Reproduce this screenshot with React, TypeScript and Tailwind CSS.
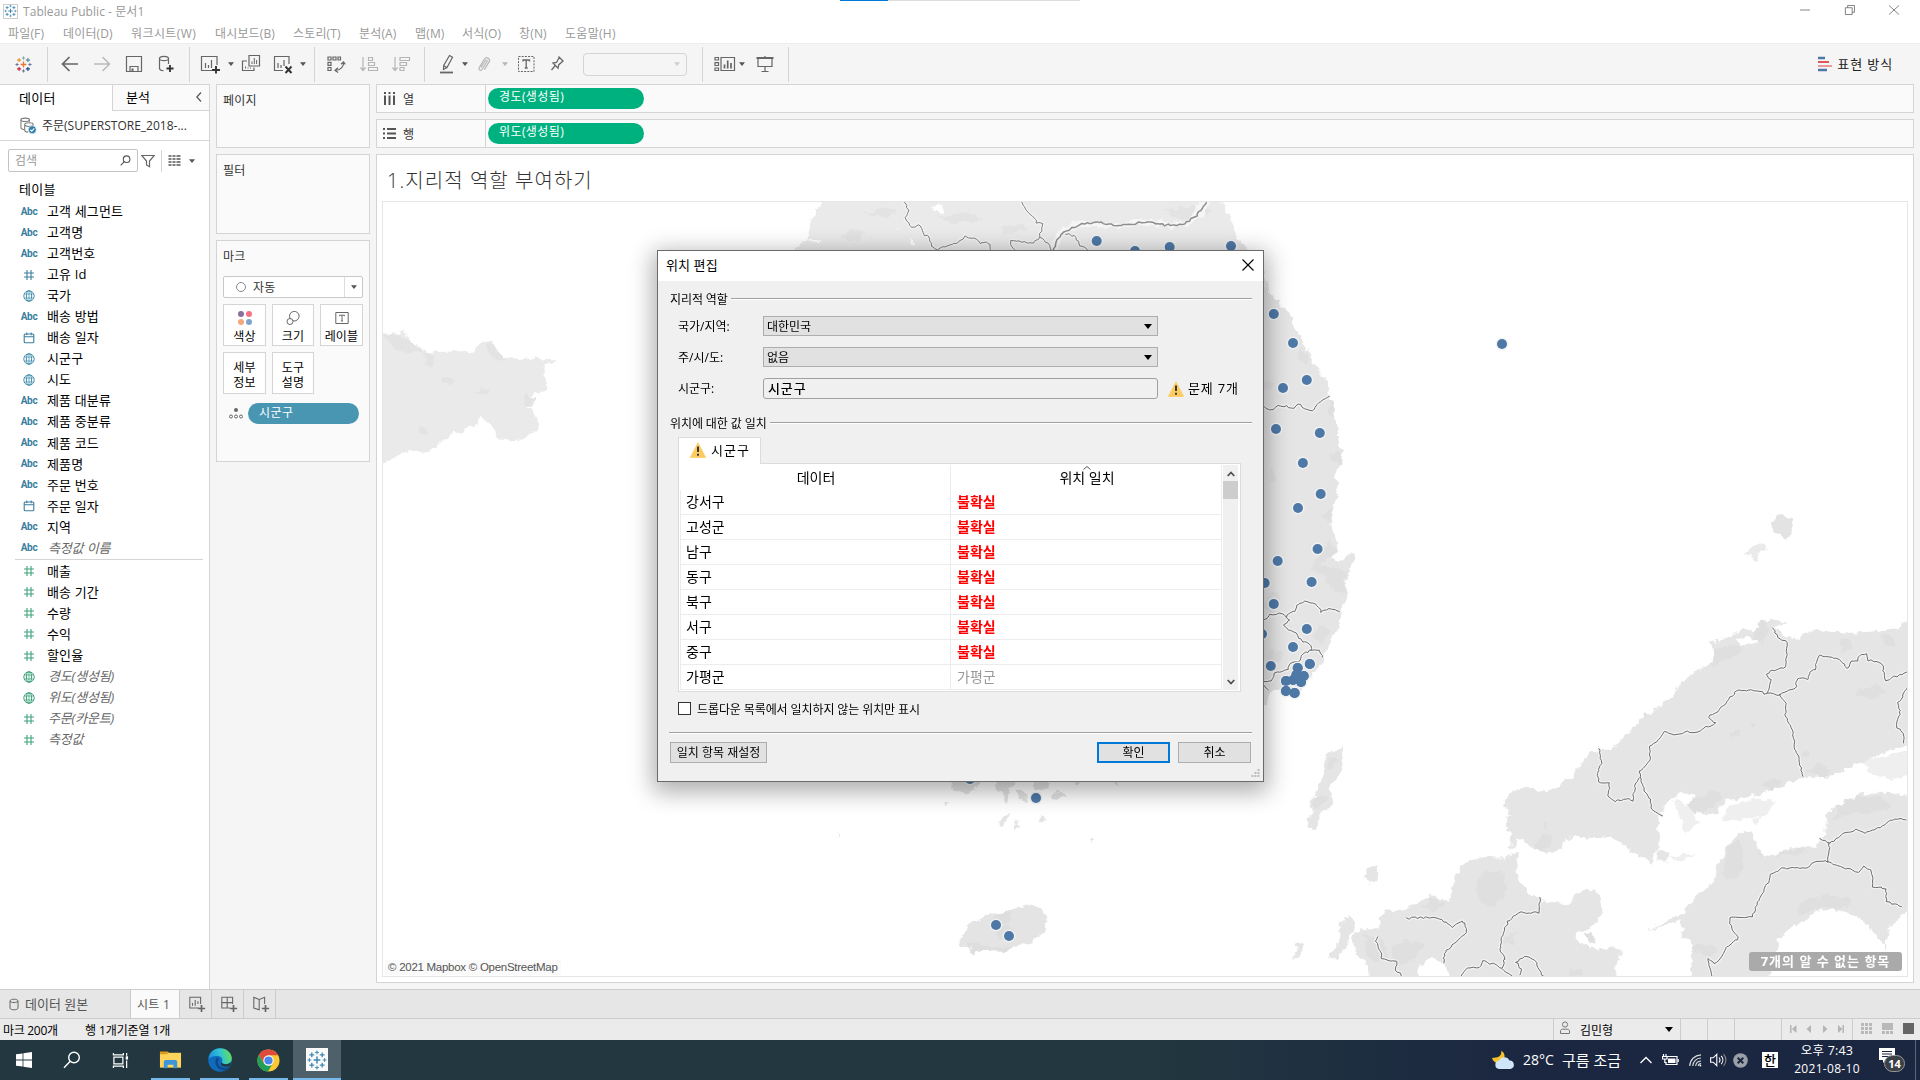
import React from "react";

const FONT = "font-['Open_Sans','Noto_Sans_CJK_KR',sans-serif]";

type Kind = "abc" | "num" | "geo" | "date";

const dimensions: [Kind, string, boolean?][] = [
  ["abc", "고객 세그먼트"],
  ["abc", "고객명"],
  ["abc", "고객번호"],
  ["num", "고유 Id"],
  ["geo", "국가"],
  ["abc", "배송 방법"],
  ["date", "배송 일자"],
  ["geo", "시군구"],
  ["geo", "시도"],
  ["abc", "제품 대분류"],
  ["abc", "제품 중분류"],
  ["abc", "제품 코드"],
  ["abc", "제품명"],
  ["abc", "주문 번호"],
  ["date", "주문 일자"],
  ["abc", "지역"],
  ["abc", "측정값 이름", true],
];

const measures: [Kind, string, boolean?][] = [
  ["num", "매출"],
  ["num", "배송 기간"],
  ["num", "수량"],
  ["num", "수익"],
  ["num", "할인율"],
  ["geo", "경도(생성됨)", true],
  ["geo", "위도(생성됨)", true],
  ["num", "주문(카운트)", true],
  ["num", "측정값", true],
];

function Cross({ x, y, r, c, w = 1 }: { x: number; y: number; r: number; c: string; w?: number }) {
  return <path d={`M${x - r} ${y}H${x + r}M${x} ${y - r}V${y + r}`} stroke={c} strokeWidth={w} fill="none" />;
}

function TableauLogo({ mono, className }: { mono?: boolean; className: string }) {
  const k = (c: string) => (mono ? "#3f86b5" : c);
  return (
    <svg viewBox="0 0 20 20" className={className}>
      <Cross x={10} y={10} r={3.4} c={k("#e8762c")} w={1.5} />
      <Cross x={10} y={2.4} r={1.9} c={k("#7199a6")} />
      <Cross x={10} y={17.6} r={1.9} c={k("#5b6591")} />
      <Cross x={2.4} y={10} r={1.9} c={k("#5c6692")} />
      <Cross x={17.6} y={10} r={1.9} c={k("#5c6692")} />
      <Cross x={4.8} y={4.8} r={2.4} c={k("#eb912b")} w={1.3} />
      <Cross x={15.2} y={4.8} r={2.4} c={k("#59879b")} w={1.3} />
      <Cross x={4.8} y={15.2} r={2.4} c={k("#c72035")} w={1.3} />
      <Cross x={15.2} y={15.2} r={2.4} c={k("#1f457e")} w={1.3} />
    </svg>
  );
}

function Caret({ className = "text-[#555]" }: { className?: string }) {
  return (
    <svg viewBox="0 0 6 4" className={`h-1 w-1.5 shrink-0 ${className}`}>
      <path d="M0 .3h6L3 4z" fill="currentColor" />
    </svg>
  );
}

function Ico({ children, className = "" }: { children: React.ReactNode; className?: string }) {
  return (
    <svg viewBox="0 0 20 20" className={`h-5 w-5 shrink-0 ${className}`} fill="none" stroke="#666" strokeWidth="1.2">
      {children}
    </svg>
  );
}

function Cell({ w, children }: { w: string; children?: React.ReactNode }) {
  return <div className={`flex h-full shrink-0 items-center justify-center ${w}`}>{children}</div>;
}

function Sep() {
  return <div className="h-[35px] w-px shrink-0 bg-[#d4d4d4]" />;
}

function Warn({ className }: { className: string }) {
  return (
    <svg viewBox="0 0 16 16" className={className}>
      <path d="M8 .8 15.6 15.4H.4z" fill="#fdcc60" stroke="#fdcc60" strokeWidth=".8" strokeLinejoin="round" />
      <path d="M8 4.5v5.6M8 11.8v2" stroke="#333" strokeWidth="1.9" />
    </svg>
  );
}

function FieldIcon({ kind, green }: { kind: Kind; green?: boolean }) {
  const c = green ? "#3fa37c" : "#3a7e9e";
  if (kind === "abc")
    return <span className="font-[Roboto] text-[10px] leading-none font-bold tracking-[-0.3px] text-[#3a7e9e]">Abc</span>;
  if (kind === "num")
    return (
      <svg viewBox="0 0 12 12" className="h-3 w-3" stroke={c} strokeWidth="1.1" fill="none">
        <path d="M4 1v10M8 1v10M1 4h10M1 8h10" />
      </svg>
    );
  if (kind === "geo")
    return (
      <svg viewBox="0 0 12 12" className="-ml-px h-3 w-3" stroke={green ? c : "#4a94b0"} strokeWidth="1" fill="none">
        <circle cx="6" cy="6" r="5.2" />
        <ellipse cx="6" cy="6" rx="2.6" ry="5.2" />
        <path d="M1.3 4h9.4M1.3 8h9.4M6 .8v10.4" strokeWidth=".8" />
      </svg>
    );
  return (
    <svg viewBox="0 0 12 12" className="h-3 w-3" stroke={c} strokeWidth="1.1" fill="none">
      <rect x="1.2" y="2" width="9.6" height="8.8" rx="1" />
      <path d="M1.2 4.8h9.6M3.8.6v2.6M8.2.6v2.6" />
    </svg>
  );
}

function FieldRow({ f, green }: { f: [Kind, string, boolean?]; green?: boolean }) {
  return (
    <div className="flex h-[21.05px] items-center">
      <div className="flex w-[58px] shrink-0 justify-center">
        <FieldIcon kind={f[0]} green={green} />
      </div>
      <span
        className={
          f[2]
            ? "-ml-2.5 text-[13px] leading-none tracking-[-0.15px] text-[#666] italic"
            : "-ml-[11px] text-[13px] leading-none tracking-[0.15px] whitespace-nowrap text-black"
        }
      >
        {f[1]}
      </span>
    </div>
  );
}

function TopBars() {
  return (
    <>
      <div className="flex h-[22px] shrink-0 items-center bg-white">
        <div className="ml-[3px] flex h-[15px] w-[15px] items-center justify-center border border-[#ccc] bg-white">
          <TableauLogo mono className="h-3.5 w-3.5" />
        </div>
        <span className="ml-[5px] w-[817px] pt-px text-[12px] leading-none tracking-[0.05px] text-[#999]">Tableau Public - 문서1</span>
        <div className="flex h-full items-start">
          <div className="h-px w-[48px] bg-[#0078d7]" />
          <div className="h-px w-48 bg-[#ddd]" />
        </div>
        <svg viewBox="0 0 110 12" className="mr-[21px] mb-0.5 ml-auto h-3 w-[100px]" fill="none" stroke="#777" preserveAspectRatio="xMaxYMid meet">
          <path d="M1 6h11M99 1l11 10M110 1 99 11" />
          <path d="M51 3.5h7.5V11H51zM53.5 3.5V1H61v7.5h-2.5" />
        </svg>
      </div>
      <div className="flex h-[21px] shrink-0 items-center bg-white pt-[2px] pl-2 text-[12px] leading-none tracking-[0.15px] whitespace-nowrap text-[#999]">
        <span className="w-[55px]">파일(F)</span>
        <span className="w-[68px]">데이터(D)</span>
        <span className="w-[84px] tracking-[0.4px]">워크시트(W)</span>
        <span className="w-[78px]">대시보드(B)</span>
        <span className="w-[66px]">스토리(T)</span>
        <span className="w-[56px]">분석(A)</span>
        <span className="w-[47px]">맵(M)</span>
        <span className="w-[57px]">서식(O)</span>
        <span className="w-[46px]">창(N)</span>
        <span className="tracking-[0.3px]">도움말(H)</span>
      </div>
      <div className="flex h-[41px] shrink-0 items-center border-t border-[#eee] bg-[#f5f5f5]">
        <Cell w="w-[47px]">
          <TableauLogo className="h-[17px] w-[17px]" />
        </Cell>
        <Sep />
        <Cell w="w-8 ml-1.5">
          <Ico>
            <path d="M18 10H3M9.5 3 2.5 10l7 7" strokeWidth="1.7" />
          </Ico>
        </Cell>
        <Cell w="w-8">
          <Ico>
            <path d="M2 10h15M10.5 3l7 7-7 7" stroke="#b9b9b9" strokeWidth="1.5" />
          </Ico>
        </Cell>
        <Cell w="w-8">
          <Ico>
            <path d="M2.5 2.5h15v15h-15zM6 17.500v-5h8v5" />
            <path d="M7.500 14.500h2v3h-2z" fill="#666" stroke="none" />
          </Ico>
        </Cell>
        <Cell w="w-8">
          <Ico>
            <path d="M3.500 4.500c0-1.200 2-2.200 4.500-2.200s4.500 1 4.500 2.200-2 2.200-4.500 2.200-4.500-1-4.500-2.200zM3.500 4.500v10c0 1.200 1.500 2 4 2.200M12.500 4.500V10" />
            <path d="M14 11v7M10.500 14.500h7" stroke="#333" strokeWidth="1.8" />
          </Ico>
        </Cell>
        <Cell w="w-[7px]" />
        <Sep />
        <Cell w="w-8 ml-1">
          <Ico>
            <path d="M12 16.500H1.500v-14h15.500V11" />
            <path d="M5.500 14V9M8.500 14v-3M11.500 14V6" />
            <path d="M16 12v7.500M12 16h8" stroke="#333" strokeWidth="1.9" />
          </Ico>
        </Cell>
        <Cell w="w-[9px]"><Caret /></Cell>
        <Cell w="w-8">
          <Ico>
            <path d="M8 1.500h10.500v10.500H8zM6 7H1.500v9.500H13v-3" />
            <path d="M11 10V7.500M13.300 10V4M15.600 10V6M4.500 14.500v-2M7 14.500v-1M9.500 14.500v-1" strokeWidth="1" />
          </Ico>
        </Cell>
        <Cell w="w-[31px]">
          <Ico>
            <path d="M10 16.500H1.500v-14h14.500V10" />
            <path d="M5 14V9M8 14v-3M11 12V6" />
            <path d="M12.500 12.500l6 6.500M18.500 12.500l-6 6.500" stroke="#333" strokeWidth="1.9" />
          </Ico>
        </Cell>
        <Cell w="w-[9px]"><Caret /></Cell>
        <Cell w="w-[7px]" />
        <Sep />
        <Cell w="w-8 ml-[5px]">
          <Ico>
            <path d="M2 3h3v3H2zM7 3h3v3H7zM12 3h2.500v3H12zM2 8.300h3v3H2zM2 13.500h3v3H2z" />
            <path d="M17.500 8c.6 4-2.500 8-8 8.500M15 10.200 17.500 7.800l1.800 2.600M12 13.700 9 16.500l3.200 2" />
          </Ico>
        </Cell>
        <Cell w="w-8 ml-px">
          <Ico>
            <path d="M4 3v13M1.500 13.500 4 16.500l2.500-3M9.500 3.500h4v3h-4zM9.500 8.500h6v3h-6zM9.500 13.500h9v3h-9z" stroke="#b5b5b5" />
          </Ico>
        </Cell>
        <Cell w="w-8">
          <Ico>
            <path d="M4 3v13M1.500 13.500 4 16.500l2.500-3M9 3.500h9.500v3H9zM9 8.500h6.500v3H9zM9 13.500h4v3H9z" stroke="#b5b5b5" />
          </Ico>
        </Cell>
        <Cell w="w-[7px]" />
        <Sep />
        <Cell w="w-8 ml-1.5">
          <Ico>
            <path d="M12.500 1.500l3 1.700-5.500 10.300-3.500 2 .2-4zM6.800 11.800l3 1.700" />
            <path d="M3 18.500h13" strokeWidth="1.800" />
          </Ico>
        </Cell>
        <Cell w="w-[4px]"><Caret /></Cell>
        <Cell w="w-8 ml-px">
          <Ico>
            <path d="M7.500 12.500 12 5.500c.6-1 2.200 0 1.600 1L8.500 14.500c-1.200 1.800-4 0-2.800-1.900L11 4c1.900-3 6.500-.2 4.600 2.900l-4.800 7.800" stroke="#b5b5b5" transform="translate(-.5 1)" />
          </Ico>
        </Cell>
        <Cell w="w-[9px]"><Caret className="text-[#b5b5b5]" /></Cell>
        <Cell w="w-8 ml-px">
          <Ico>
            <path d="M2.500 2.500h15.500v15H2.500z" strokeDasharray="2 1.200" strokeWidth="1" />
            <path d="M7 7.500V6h6.500v1.500M10.200 6v8M8.700 14h3" strokeWidth="1.300" />
          </Ico>
        </Cell>
        <Cell w="w-[30px]">
          <Ico>
            <path d="M11.500 2.500l5 5M12.200 3.500 9.500 8.500 6 9l5 5.200.800-3.500 4-3.500M8.300 11.500 4.500 16" strokeWidth="1.300" />
          </Ico>
        </Cell>
        <div className="ml-[11px] flex h-[23px] w-[104px] items-center justify-end rounded-sm border border-[#d4d4d4] bg-[#f5f5f5] pr-1.5">
          <Caret className="text-[#ccc]" />
        </div>
        <Cell w="w-[15px]" />
        <Sep />
        <Cell w="w-[44px]">
          <Ico className="w-[22px]">
            <path d="M0 3.500h3.500V6H0zM0 8.700h3.500v2.800H0zM0 14h3.500v2.500H0zM6 3.500h13.500v13H6z" />
            <path d="M9.500 14.500v-4M12.700 14.500V6.500M16 14.500V9" strokeWidth="1.700" />
          </Ico>
        </Cell>
        <div className="-ml-2 flex w-2"><Caret /></div>
        <Cell w="w-[36px]">
          <Ico>
            <path d="M1.500 4h17" strokeWidth="2" />
            <path d="M3 4v8.500h14V4M10 2v2M10 12.500V17M6.500 17.500h7" />
          </Ico>
        </Cell>
        <Cell w="w-[5px]" />
        <Sep />
        <div className="mr-[27px] ml-auto flex items-center gap-1 text-[13px] leading-none text-[#222]">
          <svg viewBox="0 0 16 16" className="h-4 w-4">
            <path d="M1 2h7" stroke="#4e79a7" strokeWidth="2.500" />
            <path d="M1 6h11" stroke="#e15759" strokeWidth="2" />
            <path d="M1 10h14" stroke="#e99a9b" strokeWidth="2" />
            <path d="M1 14h9" stroke="#4e79a7" strokeWidth="2.500" />
          </svg>
          <span className="tracking-[0.9px]">표현 방식</span>
        </div>
      </div>
    </>
  );
}

function DataPane() {
  return (
    <div className="flex w-[210px] shrink-0 flex-col border-r border-[#d4d4d4] bg-white">
      <div className="flex h-[27px] shrink-0 text-[13px] leading-none text-black">
        <div className="flex w-[112px] items-center border-t border-[#d4d4d4] pl-[19px] tracking-[0.3px]">데이터</div>
        <div className="flex flex-1 items-center border-t border-b border-l border-[#d4d4d4] bg-[#fafafa] pr-[7px] pl-[13px]">
          분석
          <svg viewBox="0 0 6 10" className="mb-0.5 ml-auto h-2.5 w-1.5" fill="none" stroke="#555" strokeWidth="1.200">
            <path d="M5 .5.800 5 5 9.500" />
          </svg>
        </div>
      </div>
      <div className="flex h-[30px] shrink-0 items-center border-b border-[#d8d8d8] pl-5 text-[12px] leading-none text-[#333]">
        <svg viewBox="0 0 18 18" className="mr-[5px] h-[17px] w-[17px]" fill="none" stroke="#777" strokeWidth="1.100">
          <ellipse cx="5.500" cy="3" rx="4.500" ry="1.800" />
          <path d="M1 3v8.500c0 1 1.500 1.700 3.500 1.900M10 3v2" />
          <path d="M5 8c0-1.200 2-2 4.500-2s4.500.8 4.500 2-2 2-4.500 2S5 9.200 5 8zM5 8v6c0 1 1.500 2 3.500 2" />
          <circle cx="13" cy="13.500" r="4.200" fill="#2f7fa8" stroke="#fff" strokeWidth=".6" />
          <path d="M11 13.500l1.500 1.600 2.600-3" stroke="#fff" strokeWidth="1.200" />
        </svg>
        <span className="whitespace-nowrap">주문(SUPERSTORE_2018-...</span>
      </div>
      <div className="mt-2 flex h-[23px] shrink-0 items-center pl-2">
        <div className="flex h-[23px] w-[130px] items-center justify-between rounded-[2px] border border-[#c4c4c4] px-1.5 text-[12px] leading-none text-[#999]">
          검색
          <svg viewBox="0 0 12 12" className="h-[11px] w-[11px]" fill="none" stroke="#555" strokeWidth="1.200">
            <circle cx="7.200" cy="4.600" r="3.600" />
            <path d="M4.600 7.200.800 11.300" />
          </svg>
        </div>
        <svg viewBox="0 0 14 14" className="ml-[3px] h-3.5 w-3.5" fill="none" stroke="#666" strokeWidth="1.200">
          <path d="M.800 1.500h12.400L8.500 7v5.800l-3-1.800V7z" />
        </svg>
        <div className="ml-[6px] h-[22px] w-px bg-[#d4d4d4]" />
        <svg viewBox="0 0 13 11" className="ml-[6px] h-[11px] w-[13px]" stroke="#555" strokeWidth="1.400">
          <path d="M.500 1h3M4.500 1h3M8.500 1h4M.500 4h3M4.500 4h3M8.500 4h4M.500 7h3M4.500 7h3M8.500 7h4M.500 10h3M4.500 10h3M8.500 10h4" />
        </svg>
        <Caret className="ml-2 text-[#555]" />
      </div>
      <div className="mt-[7px] flex h-[20px] shrink-0 items-center pl-[19px] text-[13px] leading-none tracking-[0.3px] text-black">테이블</div>
      <div className="mt-[1px] flex flex-col pt-px">
        {dimensions.map((f) => (
          <FieldRow key={f[1]} f={f} />
        ))}
        <div className="mr-[6px] ml-[15px] h-px bg-[#d4d4d4]" />
        <div className="h-px" />
        {measures.map((f) => (
          <FieldRow key={f[1]} f={f} green />
        ))}
      </div>
    </div>
  );
}

function MarkButton({ w, children }: { w: string; children: React.ReactNode }) {
  return (
    <div
      className={`flex h-[42px] flex-col items-center justify-center gap-[6px] border border-[#d4d4d4] bg-white pt-[3px] text-[12px] leading-none text-black ${w}`}
    >
      {children}
    </div>
  );
}

function CardsColumn() {
  return (
    <div className="flex w-[166px] shrink-0 flex-col pr-1.5 pl-1.5 text-[12px] leading-none tracking-[0.2px] text-[#333]">
      <div className="h-[64px] shrink-0 border border-[#d4d4d4] bg-[#fafafa] pt-[10px] pl-1.5">페이지</div>
      <div className="mt-[6px] h-[80px] shrink-0 border border-[#d4d4d4] bg-[#fafafa] pt-[10px] pl-1.5">필터</div>
      <div className="mt-[6px] flex h-[222px] shrink-0 flex-col border border-[#d4d4d4] bg-[#fafafa] px-1.5 pt-[10px]">
        마크
        <div className="mt-[13px] flex h-[22px] items-center rounded-[2px] border border-[#c8c8c8] bg-white">
          <div className="ml-3 h-2.5 w-2.5 rounded-full border border-[#888]" />
          <span className="ml-[7px] pt-px text-[12px]">자동</span>
          <div className="ml-auto flex h-full w-[18px] items-center justify-center border-l border-[#ddd]">
            <Caret />
          </div>
        </div>
        <div className="mt-[6px] flex justify-between">
          <MarkButton w="w-[43px]">
            <svg viewBox="0 0 14 14" className="h-3.5 w-3.5">
              <circle cx="3" cy="3" r="3" fill="#8a6f9c" />
              <circle cx="11" cy="3" r="3" fill="#f96f84" />
              <circle cx="3" cy="11" r="3" fill="#f6a77c" />
              <circle cx="11" cy="11" r="3" fill="#81a3cc" />
            </svg>
            색상
          </MarkButton>
          <MarkButton w="w-[42px]">
            <svg viewBox="0 0 14 14" className="h-3.5 w-3.5" fill="none" stroke="#666">
              <path d="M4 7.300A4.800 4.800 0 1 1 7 9.800" />
              <circle cx="4" cy="10.500" r="3" />
            </svg>
            크기
          </MarkButton>
          <MarkButton w="w-[43px]">
            <svg viewBox="0 0 14 14" className="h-3.5 w-3.5" fill="none" stroke="#666">
              <path d="M.800 1.500h12.400v11H.800z" />
              <path d="M4.500 5.200V4.200h5v1M7 4.200V10M6 10h2" />
            </svg>
            레이블
          </MarkButton>
        </div>
        <div className="mt-[6px] flex gap-[6px]">
          <MarkButton w="w-[43px]">
            <span className="text-center leading-[15px]">세부<br />정보</span>
          </MarkButton>
          <MarkButton w="w-[42px]">
            <span className="text-center leading-[15px]">도구<br />설명</span>
          </MarkButton>
        </div>
        <div className="mt-[9px] flex items-center">
          <svg viewBox="0 0 14 11" className="ml-1.5 h-[11px] w-3.5" fill="none" stroke="#666">
            <circle cx="7" cy="2" r="2" fill="#666" stroke="none" />
            <circle cx="2" cy="8.500" r="1.500" />
            <circle cx="7" cy="8.500" r="1.500" />
            <circle cx="12" cy="8.500" r="1.500" />
          </svg>
          <div className="ml-[5px] flex h-[21px] w-[111px] items-center rounded-full bg-[#4996b2] pb-px pl-[11px] text-[12px] tracking-[0.5px] text-white">
            시군구
          </div>
        </div>
      </div>
    </div>
  );
}

function Shelf({ label, pill, rows }: { label: string; pill: string; rows?: boolean }) {
  return (
    <div className="flex h-[29px] shrink-0 items-center border border-[#d4d4d4] bg-[#fafafa] text-[12px] leading-none text-[#333]">
      <div className="flex h-full w-[109px] items-center border-r border-[#d4d4d4] pl-1.5">
        <svg viewBox="0 0 13 13" className="mr-[7px] h-[13px] w-[13px]" fill="#555">
          {rows ? (
            <path d="M0 1h2v2H0zM4 1h9v2H4zM0 5.500h2v2H0zM4 5.500h9v2H4zM0 10h2v2H0zM4 10h9v2H4z" />
          ) : (
            <path d="M1 0h2v2H1zM1 3.500h2V13H1zM5.500 0h2v2h-2zM5.500 3.500h2V13h-2zM10 0h2v2h-2zM10 3.500h2V13h-2z" />
          )}
        </svg>
        <span className="pt-0.5">{label}</span>
      </div>
      <div className="mb-px ml-[2px] flex h-[21px] w-[156px] items-center rounded-full bg-[#00b180] pb-0.5 pl-[11px] text-[12px] tracking-[0.4px] text-white">
        {pill}
      </div>
    </div>
  );
}

const points: [number, number][] = [
  [1273.8, 314], [1293, 343], [1502, 344], [1306.8, 380], [1283, 388], [1276, 429], [1319.8, 433], [1302.9, 463],
  [1320.7, 494], [1298, 508], [1317.6, 549], [1277.7, 561], [1264.7, 583], [1311.6, 582], [1273.8, 604],
  [1306.8, 629], [1262, 634], [1293, 647], [1270.8, 666], [1309.8, 664], [1297.7, 668], [1303.7, 676], [1301, 682],
  [1293, 680], [1286, 681], [1296.4, 675], [1286, 691], [1294.6, 693], [1096.7, 241], [1135, 251], [1169.7, 247],
  [1231, 246], [996, 925], [1009, 936], [1036, 798], [970, 779],
];

/** Turns coarse polylines ("x y x y …", parts split by M) into finely jagged border lines. */
function jagged(d: string, ox: number, oy: number, sx: number, sy: number) {
  let seed = 17;
  const rnd = () => {
    seed = (seed * 16807) % 2147483647;
    return seed / 2147483647 - 0.5;
  };
  return d
    .split("M")
    .filter(Boolean)
    .map((part) => {
      const n = part.trim().split(/\s+/).map(Number);
      const out: string[] = [];
      for (let i = 0; i + 3 < n.length; i += 2) {
        const x0 = ox + n[i] * sx;
        const y0 = oy + n[i + 1] * sy;
        const x1 = ox + n[i + 2] * sx;
        const y1 = oy + n[i + 3] * sy;
        const steps = Math.max(1, Math.round(Math.hypot(x1 - x0, y1 - y0) / 2.6));
        for (let s = 0; s < steps; s++) {
          const t = s / steps;
          out.push(`${(x0 + (x1 - x0) * t + rnd() * 2).toFixed(1)} ${(y0 + (y1 - y0) * t + rnd() * 2).toFixed(1)}`);
        }
        if (i + 5 >= n.length) out.push(`${x1.toFixed(1)} ${y1.toFixed(1)}`);
      }
      return "M" + out.join("L");
    })
    .join("");
}

const northBorders = jagged(
  "M932 36 938 60 932 90 945 110 960 105 965 135 975 140 978 170 990 178 1010 165 1022 160 1035 140 1052 145 1062 160 1078 158 1082 190M1137 36 1142 60 1155 80 1162 100 1172 100 1167 140 1155 160 1117 152 1118 170 1130 190M1167 140 1185 165 1190 190M1210 130 1230 140 1235 165 1250 180",
  370, 190, 0.574, 1 / 3,
);
const dmz = jagged(
  "M1190 190 1195 155 1210 125 1240 100 1275 98 1300 108 1350 96 1385 105 1415 105 1440 80 1457 36",
  370, 190, 0.574, 1 / 3,
);
const eastBorders = jagged(
  "M40 645 55 650 75 662 90 645 125 653 133 640 160 664 172 662 175 650 190 630 207 618M40 1300 70 1275 90 1270 105 1280 128 1262 130 1245 150 1235 175 1242 188 1268 205 1255 230 1265M105 1280 115 1290 102 1305 112 1320 130 1330 145 1355 160 1360 166 1380 185 1380 190 1402M166 1380 145 1390 135 1415 115 1422 110 1440 80 1450 72 1472 50 1475M50 1480 66 1500",
  1240, 190, 0.43367, 1 / 3,
);
const japanBorders = jagged(
  "M1230 85 1240 110 1262 130 1262 160 1258 200 1222 215 1216 225 1226 240 1215 280M1245 285 1268 268 1282 262 1285 235 1312 238 1315 215 1326 208 1335 165 1352 172 1382 178 1400 205 1410 185 1425 182 1428 168 1445 162 1450 180 1480 190 1490 240 1520 225 1539 215M1245 285 1210 280 1190 272 1145 270 1128 300 1110 325 1080 352 1098 370 1070 385 1050 397 1030 395 1000 402 978 395 965 420 945 440 945 480 922 515 928 560 945 600 950 630 975 648M922 535 912 550 905 602 890 595 865 605 848 590 852 550 830 550 822 520 835 490 827 445M1245 285 1258 310 1258 350 1275 390 1278 440 1290 480 1298 530M1539 262 1518 310 1522 345 1512 375 1530 400 1530 430M1539 658 1500 658 1480 680 1440 698 1425 688 1390 700 1370 722 1360 728 1336 715M1360 728 1355 785 1325 785 1310 802 1250 806 1225 825 1205 880 1195 905 1180 950 1128 955 1135 990 1150 1012 1120 1045 1110 1070 1095 1092 1078 1075 1088 1128M1355 785 1380 798 1425 815 1440 800 1455 812 1460 860 1488 865 1492 905 1526 920M385 955 440 952 465 960 490 980 512 962 520 970 520 1005 490 1035 470 1060 470 1090M317 1008 312 1025 325 1055 328 1078 360 1085 360 1110 372 1128M692 892 690 938 640 938 618 965 605 1005 598 1050 610 1075 605 1105 560 1080 550 1102 525 1105 510 1128M605 1105 628 1128M645 1128 648 1110 637 1085 655 1070 680 1078 690 1110 700 1128",
  1240, 600, 0.43367, 1 / 3,
);

function MapView() {
  return (
    <svg viewBox="383 202 1524 774" className="block h-full w-full" preserveAspectRatio="none">
      <defs>
        <filter id="coast" x="383" y="202" width="1524" height="774" filterUnits="userSpaceOnUse">
          <feTurbulence type="fractalNoise" baseFrequency="0.12" numOctaves="3" seed="4" result="n" />
          <feDisplacementMap in="SourceGraphic" in2="n" scale="9" xChannelSelector="R" yChannelSelector="G" />
        </filter>
      </defs>
      <rect x="383" y="202" width="1524" height="774" fill="#fff" />
      <g filter="url(#coast)">
        <g transform="translate(370 190) scale(.574 .33333)" fill="#eaeaea">
          <path d="M0 435 55 430 62 420 70 455 105 490 180 485 195 455 213 450 222 490 240 505 325 508 300 530 310 600 280 615 270 650 295 680 290 720 265 752 220 745 210 700 190 680 185 705 130 745 100 790 70 780 22 820H0z" />
          <path d="M730 200 765 140 770 90 790 20H1480L1500 90 1515 150 1540 200 1570 300H800z" />
          <g fill="#e3e3e3">
            <path d="M22 435 55 432 75 460 95 485 60 490 40 470z" />
            <path d="M125 560l25 5-8 20-18-8zM195 590l14 10-6 20-18-5zM270 615l20 10-10 30-12-8zM205 460l10 5 20 40-14 10-18-30zM95 490l18 8-4 35-14-12zM85 700l12 10 2 30-12-10z" />
            <path d="M830 120l30 5-10 30-30-8zM990 80l60-10 20 20-50 10zM1380 60l60-14 30 20-60 22zM1100 110l40-8 6 20-40 8zM860 70l40-20 20 20-30 12z" />
          </g>
          <path d="M1190 181 1195 150 1210 120 1240 100 1300 108 1350 96 1415 105 1440 80 1457 30" fill="none" stroke="#f6f6f6" strokeWidth="16" />
          <path d="M980 50l20 0-4 15-16-3zM765 150l24 0-6 8-18 0zM940 150l10 6 2 12-10-6zM915 108l5 8-4 8z" fill="#fff" />
        </g>
        <g transform="translate(1240 190) scale(.43367 .33333)">
          <path
            fill="#e5e5e5"
            d="M0 150 55 285 90 340 122 385 124 405 140 440 160 490 185 545 203 590 205 620 220 660 218 690 222 740 236 780 233 820 220 850 227 880 224 940 212 965 210 1000 218 1050 225 1075 210 1100 230 1120 250 1100 258 1080 264 1100 250 1150 246 1200 236 1250 231 1290 222 1335 206 1350 200 1390 180 1430 160 1460 150 1490 130 1510 100 1500 75 1500 60 1540 0 1560z"
          />
          <g fill="#dfdfdf">
            <path d="M205 620l16 40-4 30-14-20zM200 790l34 0-2 30-20-5zM210 960l-25 20 20 20zM205 1050l20 30-40 40 60 30-4 60-30-10-20-50-30-10zM70 830l16 40-16 10zM60 570l20 12-10 20-20-8zM140 475l20 30-10 20-22-20zM70 1200l20 20-20 50-15-20zM70 1380l30 10-10 30-28 8zM180 1300l30 20-20 40-20-20z" />
          </g>
          <path d="M1250 972 1268 985 1280 1010 1268 1035 1252 1045 1228 1025 1230 990z" fill="#e3e3e3" />
          <path d="M1185 1062 1210 1065 1215 1080 1195 1090 1193 1112 1180 1110 1182 1095 1165 1090z" fill="#eaeaea" />
        </g>
        <g transform="translate(1240 600) scale(.43367 .33333)" fill="#e5e5e5">
          <path d="M1560 45 1510 85 1450 95 1390 100 1330 88 1305 100 1290 120 1270 115 1250 105 1232 80 1262 72 1205 60 1185 85 1140 98 1110 115 1080 132 1092 150 1088 185 1050 215 1020 245 990 295 940 345 900 395 860 445 830 455 808 455 790 490 765 530 735 560 700 575 660 560 625 575 610 600 620 640 612 680 625 710 622 755 645 715 670 740 690 755 740 750 750 715 780 710 820 715 860 710 880 735 930 775 950 800 955 770 968 740 965 650 985 610 1020 575 1045 590 1060 640 1100 640 1120 600 1180 590 1240 560 1290 535 1370 525 1430 490 1500 450 1560 425z" />
          <path d="M1560 590 1480 575 1420 585 1370 620 1350 650 1350 700 1330 740 1270 745 1215 768 1195 745 1180 700 1165 685 1150 710 1120 735 1115 770 1098 790 1095 840 1060 880 1020 940 930 995 1015 960 1020 1010 1045 1030 1040 1080 1045 1150 1205 1150 1240 1060 1245 1010 1290 970 1330 935 1370 928 1420 945 1450 980 1490 1045 1500 980 1560 900z" />
          <path d="M505 800 530 780 570 770 610 775 640 755 640 830 665 880 700 905 760 910 770 880 800 868 830 885 838 930 820 975 778 1000 785 1030 820 1048 880 1045 865 1090 870 1150 490 1150 470 1090 440 1070 410 1110 420 1150 300 1150 290 1080 265 1060 262 1000 320 985 330 930 370 935 410 910 440 885 480 905 495 850z" />
          <path d="M240 440 210 462 190 480 195 510 183 560 165 610 155 685 175 690 190 640 215 610 208 560 235 500z" />
          <path d="M300 795 315 800 318 830 302 852 286 830 295 815zM250 945l15 15-10 50-30 65-20 0 20-40 5-60zM140 1030l6 10-8 30-16 6zM965 752l25 10-8 24-22-6z" />
          <path d="M1440 480 1539 455 1560 520 1500 540 1450 520zM1000 600l40 20 20 50-30 30-20-50zM1130 610l60-14 50 8-30 40-60 20-40 0zM990 770l60-10-10 12-40 12zM1180 660l20-10-12 30z" fill="#efefef" />
          <path d="M1145 120l50-8 0 12-44 14z" fill="#fff" />
          <g fill="#dfdfdf">
            <path d="M1090 150l50-15 20 15-50 40-20 10zM1185 80l25-20 10 30-15 40-20-15zM1425 265l50-10 15 20-30 25-34-8zM1380 110l20 0 12 30-20 20zM1480 100l28 10 2 30-20-6zM1140 385l12 10-4 16-14-6zM1180 365l10 8-6 12zM1300 455l20 0-4 14-16 0zM930 340l14 4-10 20zM700 660l14 10-6 22zM700 700l20 4-5 40-35 10 0-20zM1060 590l30-20 20 20-20 30-40 20-25-30zM1200 555l30-20 20 10-20 25zM1300 510l40-20 20 20-10 20z" />
            <path d="M1380 615l40-25 60 0 20 30-40 20-60 5-30 10zM1300 900l50-15 60 10-10 30-60-5-30 20-30 0zM1125 740l25-20 10 30 0 60-30 30-20-20 12-40zM1040 1040l40-10 20 20-20 20zM1230 765l60-20 20 8-50 16zM1190 750l14 14 4 14z" />
            <path d="M550 830l30-20 30 10 0 70-30 30-30-20-4-30zM350 1040l40-20 40 10-30 50-40 20zM290 1000l40 20 10 50-30 20-20-30zM440 890l30 20-20 30-30-20zM610 1010l30-14-10 30-20 10zM790 1000l20-4 10 30-20 4zM760 1110l30-4 0 22-30 0zM205 470l20 10-20 40zM175 585l30 5-20 30-15 10z" />
          </g>
        </g>
        <g transform="translate(820 770) scale(.33333)" fill="#e4e4e4">
          <path d="M418 512 440 478 460 455 500 438 560 422 620 408 655 412 682 432 682 460 660 500 630 518 580 530 560 542 520 545 480 535 460 555 440 530 422 530z" />
          <path d="M395 30H490L470 55 430 72 405 60zM530 30H590L570 60 562 96 545 95 550 70 530 60zM588 55l20 5 18 40-24-12-14-16zM640 30l50 10-10 20-30 0zM715 60l22 16-36 18-6-10zM565 125l5 20-30 25-2-12zM590 145l5 25-12 0zM665 135l16 10-6 14-16-4zM1432 518l18 4-6 16-18-8zM870 30h24l-6 16zM750 30h34l-6 10zM808 200l14 4-8 14zM48 186l12 10-4 4zM370 92l18 8-16 4z" />
          <path d="M540 425l34-4-4 30-30 14-26-20zM520 480l50-20 10 30-40 15zM440 520l80 10 60 0-20 16-80-6-20 10z" fill="#dedede" />
        </g>
      </g>
      <g fill="none" strokeLinejoin="round">
        <path d={northBorders + eastBorders + japanBorders} stroke="#f3f3f3" strokeWidth="3.5" />
        <path d={northBorders} stroke="#808080" strokeWidth="1" />
        <path d={eastBorders + japanBorders} stroke="#6c6c6c" strokeWidth="1" />
        <path d={dmz} stroke="#8e8e8e" strokeWidth="1.5" />
      </g>
      <g fill="#4e79a7" stroke="#f2f2f2" strokeOpacity=".9" strokeWidth="3" paintOrder="stroke">
        {points.map(([x, y]) => (
          <circle key={`${x}-${y}`} cx={x} cy={y} r="5" />
        ))}
      </g>
      <g fill="#4e79a7">
        {points.slice(19, 28).map(([x, y]) => (
          <circle key={`${x}-${y}`} cx={x} cy={y} r="5" />
        ))}
      </g>
    </svg>
  );
}

function Workspace() {
  return (
    <div className="flex min-w-0 flex-1 flex-col pr-[6px]">
      <Shelf label="열" pill="경도(생성됨)" />
      <div className="h-[6px] shrink-0" />
      <Shelf label="행" pill="위도(생성됨)" rows />
      <div className="mt-[6px] flex h-[829px] shrink-0 flex-col border border-[#d4d4d4] bg-white px-[5px]">
        <div className="flex h-[46px] shrink-0 items-center pt-[5px] pl-[5px] text-[20px] leading-none font-light tracking-[1.05px] text-[#333]">
          1.지리적 역할 부여하기
        </div>
        <div className="relative h-[776px] border border-[#e6e6e6]">
          <MapView />
          <div className="absolute bottom-px left-0.5 bg-[#fafafa] px-[3px] font-['Liberation_Sans'] text-[11.5px] leading-[15px] tracking-[-0.27px] text-[#555]">
            © 2021 Mapbox © OpenStreetMap
          </div>
          <div className="absolute right-[5px] bottom-[5px] flex h-[19px] w-[153px] items-center justify-center rounded-[3px] bg-[#aaa] text-[13px] leading-none font-bold tracking-[1px] whitespace-nowrap text-white">
            7개의 알 수 없는 항목
          </div>
        </div>
      </div>
    </div>
  );
}

const matches: [string, string][] = [
  ["강서구", "불확실"],
  ["고성군", "불확실"],
  ["남구", "불확실"],
  ["동구", "불확실"],
  ["북구", "불확실"],
  ["서구", "불확실"],
  ["중구", "불확실"],
  ["가평군", "가평군"],
];

function GroupTitle({ children }: { children: React.ReactNode }) {
  return (
    <div className="flex h-4 shrink-0 items-center gap-[3px] pr-[11px] pl-3">
      <span className="pt-0.5 tracking-[-0.1px] whitespace-nowrap">{children}</span>
      <div className="mb-px h-[2px] flex-1 border-t border-[#a0a0a0] bg-white" />
    </div>
  );
}

function Combo({ children }: { children: React.ReactNode }) {
  return (
    <div className="flex h-5 w-[395px] items-center justify-between border border-[#adadad] bg-[#e1e1e1] pr-[5px] pl-[3px]">
      <span className="pt-0.5">{children}</span>
      <svg viewBox="0 0 8 5" className="h-[5px] w-2">
        <path d="M0 0h8L4 5z" />
      </svg>
    </div>
  );
}

function Dialog() {
  return (
    <div className="absolute top-[250px] left-[657px] flex h-[532px] w-[607px] flex-col border border-[#6a6a6a] bg-[#f0f0f0] text-[12px] leading-none text-black shadow-[0_6px_22px_4px_rgba(0,0,0,0.32)]">
      <div className="flex h-[30px] shrink-0 items-center justify-between bg-white pr-[9px] pb-[2px] pl-2 text-[13px] tracking-[0.1px]">
        위치 편집
        <svg viewBox="0 0 12 12" className="h-3 w-3" stroke="#000" strokeWidth="1.100">
          <path d="M.500.500l11 11M11.500.500l-11 11" />
        </svg>
      </div>
      <div className="h-[10px] shrink-0" />
      <GroupTitle>지리적 역할</GroupTitle>
      <div className="mt-[9px] ml-5 flex h-5 shrink-0 items-center">
        <span className="w-[85px] pt-0.5">국가/지역:</span>
        <Combo>대한민국</Combo>
      </div>
      <div className="mt-[11px] ml-5 flex h-5 shrink-0 items-center">
        <span className="w-[85px] pt-0.5">주/시/도:</span>
        <Combo>없음</Combo>
      </div>
      <div className="mt-[11px] ml-5 flex h-[21px] shrink-0 items-center">
        <span className="w-[85px]">시군구:</span>
        <div className="flex h-[21px] w-[395px] items-center rounded-[3px] border border-[#a0a0a0] pl-1 text-[13px] font-medium tracking-[0.9px]">시군구</div>
        <Warn className="ml-[10px] h-4 w-4" />
        <span className="ml-1 text-[13px] tracking-[0.8px]">문제 7개</span>
      </div>
      <div className="mt-[16px] shrink-0">
        <GroupTitle>위치에 대한 값 일치</GroupTitle>
      </div>
      <div className="mt-[6px] ml-5 flex h-[26px] w-[563px] shrink-0">
        <div className="z-10 -mb-px flex w-[83px] items-center border border-b-0 border-[#dcdcdc] bg-white pb-[2px] pl-[11px] text-[13px] tracking-[1px]">
          <Warn className="mr-[5px] h-4 w-4" />
          시군구
        </div>
      </div>
      <div className="ml-5 flex h-[229px] w-[563px] shrink-0 border border-[#dcdcdc] bg-white pt-px pb-[2px] pl-px text-[13px]">
        <div className="flex w-[542px] flex-col">
          <div className="flex h-[25px] shrink-0 text-[14px]">
            <div className="flex w-[271px] items-center justify-center border-r border-[#ececec] pl-0.5">데이터</div>
            <div className="relative flex flex-1 items-center justify-center border-r border-[#ececec] pl-0.5">
              위치 일치
              <svg viewBox="0 0 8 4" className="absolute top-px h-1 w-2" fill="none" stroke="#555">
                <path d="M.500 3.500 4 .500l3.500 3" />
              </svg>
            </div>
          </div>
          {matches.map(([a, b]) => (
            <div key={a} className="flex h-[25px] shrink-0 border-b border-l border-[#ececec] text-[14px]">
              <div className="flex w-[270px] items-center border-r border-[#ececec] pl-[5px]">{a}</div>
              <div
                className={
                  b === "불확실"
                    ? "flex flex-1 items-center border-r border-[#ececec] pl-1.5 font-bold text-[#f00]"
                    : "flex flex-1 items-center border-r border-[#ececec] pl-1.5 text-[#999]"
                }
              >
                {b}
              </div>
            </div>
          ))}
        </div>
        <div className="ml-px flex h-[225px] w-[15px] flex-col items-center justify-between bg-[#f0f0f0] pt-[6px] pb-[5px]">
          <div className="flex w-full flex-col items-center">
            <svg viewBox="0 0 8 6" className="h-1.5 w-2" fill="none" stroke="#505050" strokeWidth="1.800">
              <path d="M.700 5 4 1.500 7.300 5" />
            </svg>
            <div className="mt-1 h-[18px] w-[15px] bg-[#cdcdcd]" />
          </div>
          <svg viewBox="0 0 8 6" className="h-1.5 w-2" fill="none" stroke="#505050" strokeWidth="1.800">
            <path d="M.700 1 4 4.500 7.300 1" />
          </svg>
        </div>
      </div>
      <div className="mt-[10px] ml-5 flex h-[14px] shrink-0 items-center">
        <div className="-mt-px h-[13px] w-[13px] border border-[#333] bg-white" />
        <span className="ml-1.5 pt-px tracking-[-0.1px] whitespace-nowrap">드롭다운 목록에서 일치하지 않는 위치만 표시</span>
      </div>
      <div className="mt-[16px] mr-[11px] ml-[11px] h-[2px] shrink-0 border-t border-[#a0a0a0] bg-white" />
      <div className="mt-[8px] mr-3 ml-3 flex h-[21px] shrink-0">
        <div className="flex w-[97px] items-center justify-center border border-[#adadad] bg-[#e1e1e1] pt-px whitespace-nowrap">일치 항목 재설정</div>
        <div className="ml-auto flex w-[73px] items-center justify-center border-2 border-[#0078d7] bg-[#e1e1e1] pt-px">확인</div>
        <div className="ml-2 flex w-[73px] items-center justify-center border border-[#adadad] bg-[#e1e1e1] pt-px">취소</div>
      </div>
      <svg viewBox="0 0 9 9" className="mt-auto mr-[3px] mb-[3px] ml-auto h-[9px] w-[9px]" fill="#bbb">
        <path d="M6.500 0h2v2h-2zM6.500 3h2v2h-2zM6.500 6h2v2h-2zM3.500 3h2v2h-2zM3.500 6h2v2h-2zM.500 6h2v2h-2z" />
      </svg>
    </div>
  );
}

function BottomTabs() {
  return (
    <>
      <div className="flex h-[30px] shrink-0 border-t border-b border-[#ccc] bg-[#e6e6e6] text-[13px] leading-none text-[#555]">
        <div className="flex w-[130px] items-center pl-[9px]">
          <svg viewBox="0 0 10 13" className="mr-[6px] h-[13px] w-2.5" fill="none" stroke="#666">
            <path d="M1 3c0-1 1.800-1.800 4-1.800S9 2 9 3v7c0 1-1.800 1.800-4 1.800S1 11 1 10zM1 3c0 1 1.800 1.500 4 1.500S9 4 9 3" />
          </svg>
          데이터 원본
        </div>
        <div className="flex w-[50px] items-center border-r border-l border-[#ccc] bg-[#fafafa] pt-px pl-[6px] text-[12px] tracking-[0.3px] whitespace-nowrap">시트 1</div>
        <div className="flex w-8 items-center justify-center border-r border-[#ccc] pl-0.5">
          <Ico className="h-[18px] w-[18px] overflow-visible">
            <path d="M12 14.500H2v-12h12V10M5 12V9M8 12V5.500M11 10V7" />
            <path d="M15 11v8M11 15h8" strokeWidth="1.900" />
          </Ico>
        </div>
        <div className="flex w-8 items-center justify-center border-r border-[#ccc] pl-0.5">
          <Ico className="h-[18px] w-[18px]">
            <path d="M11 14.500H2v-12h12V10M8 2.500v12M2 8.500h12" />
            <path d="M15 11v8M11 15h8" strokeWidth="1.900" />
          </Ico>
        </div>
        <div className="flex w-8 items-center justify-center border-r border-[#ccc] pl-0.5">
          <Ico className="h-[18px] w-[18px]">
            <path d="M8 5 2 2.500v12l6 2V5l6-2.500V10" />
            <path d="M15 11v8M11 15h8" strokeWidth="1.900" />
          </Ico>
        </div>
      </div>
      <div className="flex h-[21px] shrink-0 items-center bg-[#ebebeb] text-[12px] leading-none text-black">
        <span className="ml-[3px] w-[82px] pt-0.5 tracking-[-0.3px] whitespace-nowrap">마크 200개</span>
        <span className="pt-0.5 tracking-[-0.1px] whitespace-nowrap">행 1개기준열 1개</span>
        <div className="ml-auto flex h-full w-[127px] items-center border-l border-[#ccc] pl-[5px]">
          <svg viewBox="0 0 12 14" className="-mt-1 h-3.5 w-3" fill="none" stroke="#777">
            <circle cx="6" cy="3.500" r="2.600" />
            <path d="M1.500 12.500V10c0-1 1-1.800 2-1.800h5c1 0 2 .8 2 1.800v2.500z" />
          </svg>
          <span className="ml-[9px] pt-0.5">김민형</span>
          <svg viewBox="0 0 8 5" className="mr-[7px] ml-auto h-[5px] w-2">
            <path d="M0 0h8L4 5z" />
          </svg>
        </div>
        <div className="h-full w-[27px] border-l border-[#ccc]" />
        <div className="h-full w-[27px] border-l border-[#ccc]" />
        <div className="h-full w-[47px] border-l border-[#ccc]" />
        <div className="flex h-full w-[71px] items-center border-l border-[#ccc] pb-0.5 pl-[7px]">
          <svg viewBox="0 0 56 8" className="h-2 w-14" fill="#b5b5b5">
            <path d="M1 0h1.500v8H1zM7.500 0v8L3 4zM22 0v8l-4.500-4zM34 0v8l4.500-4zM49 0v8l4.500-4zM53.500 0H55v8h-1.500z" />
          </svg>
        </div>
        <div className="flex h-full w-[68px] items-center gap-[10px] border-l border-[#ccc] pb-0.5 pl-2">
          <svg viewBox="0 0 11 11" className="h-[11px] w-[11px]" fill="#b9b9b9">
            <path d="M0 0h3v3H0zM4 0h3v3H4zM8 0h3v3H8zM0 4h3v3H0zM4 4h3v3H4zM8 4h3v3H8zM0 8h3v3H0zM4 8h3v3H4zM8 8h3v3H8z" />
          </svg>
          <svg viewBox="0 0 11 11" className="h-[11px] w-[11px]" fill="#b9b9b9">
            <path d="M0 0h11v7H0zM0 8h3v3H0zM4 8h3v3H4zM8 8h3v3H8z" />
          </svg>
          <div className="h-[11px] w-[11px] bg-[#666]" />
        </div>
      </div>
    </>
  );
}

function Taskbar() {
  return (
    <div className="flex h-10 shrink-0 bg-linear-to-r from-[#22373f] from-60% to-[#1b2641] to-80% text-white">
      <Cell w="w-12">
        <svg viewBox="0 0 16 16" className="h-4 w-4" fill="#fff">
          <path d="M0 2.300 6.600 1.400v6.200H0zM7.400 1.300 16 0v7.600H7.400zM0 8.400h6.600v6.200L0 13.700zM7.400 8.400H16V16l-8.600-1.300z" />
        </svg>
      </Cell>
      <Cell w="w-12">
        <svg viewBox="0 0 18 18" className="h-[18px] w-[18px]" fill="none" stroke="#fff" strokeWidth="1.400">
          <circle cx="11" cy="6.500" r="5.300" />
          <path d="M7.200 10.300 1 16.800" />
        </svg>
      </Cell>
      <Cell w="w-12">
        <svg viewBox="0 0 18 18" className="h-[17px] w-[17px]" fill="none" stroke="#fff" strokeWidth="1.300">
          <path d="M2 5.500h9.500v7H2zM1.500 1v2h10.500V1M1.500 17v-2h10.500v2M15.500 1v3M15.500 9v8" />
          <path d="M14.500 4.500h2.500v3.500h-2.500z" fill="#fff" stroke="none" />
        </svg>
      </Cell>
      <div className="ml-[7px] flex w-[39px] flex-col items-center justify-between">
        <svg viewBox="0 0 24 20" className="mt-[10px] h-5 w-[23px]">
          <path d="M1 1h8l2 2H1z" fill="#d99a1b" />
          <path d="M1 2.500h22V18H1z" fill="#ffd35c" />
          <path d="M1 2.500h8v1.500H1z" fill="#d99a1b" />
          <path d="M5 18.500V12c0-1 .8-2 2-2h10c1.200 0 2 1 2 2v6.500h-4V15H9v3.500z" fill="#3d96d9" />
        </svg>
        <div className="h-0.5 w-full bg-[#76b9ed]" />
      </div>
      <div className="ml-[10px] flex w-[39px] flex-col items-center justify-between">
        <svg viewBox="0 0 24 24" className="mt-2 h-6 w-6">
          <defs>
            <linearGradient id="eg" x1="0" x2="1" y1=".5" y2=".3">
              <stop offset="0" stopColor="#1f8fdd" />
              <stop offset=".5" stopColor="#2fc2d6" />
              <stop offset="1" stopColor="#6be04f" />
            </linearGradient>
          </defs>
          <circle cx="12" cy="12" r="11.800" fill="#0f6cbd" />
          <path d="M.500 11C1 4.500 6 .300 12 .300c7 0 11.800 5 11.800 10.200 0 3.500-2.500 5.700-5.800 5.700-3 0-4.500-1.200-4-2.200 1.500-3-1-6-4.500-6C5 8 1.500 9.500.500 11z" fill="url(#eg)" />
          <path d="M9 9.500c-3 3-2 9.500 3 12 4 1.800 8 0 10-3-6 3-12 0-12-4 0-1.500.5-2.500 1.500-3.500z" fill="#114a8b" />
          <path d="M13.800 14c-.3 1.200 1 2.200 4.200 2.200 2.200 0 4-1 5-2.500l-.6 4c-4 2-9 1-9.800-2z" fill="#22373f" />
        </svg>
        <div className="h-0.5 w-full bg-[#76b9ed]" />
      </div>
      <div className="ml-[10px] flex w-[39px] flex-col items-center justify-between">
        <svg viewBox="0 0 24 24" className="mt-[9px] h-[23px] w-[23px]">
          <circle cx="12" cy="12" r="11.500" fill="#fbc834" />
          <path d="M12 6.500H22A11.500 11.500 0 0 0 2 6.200l5 8.600z" fill="#de4a3c" />
          <path d="M2 6.200A11.500 11.500 0 0 0 11.500 23.500l5-8.600-4.500 2.600-5-2.700z" fill="#1ea05a" />
          <circle cx="12" cy="12" r="5.400" fill="#fff" />
          <circle cx="12" cy="12" r="4.300" fill="#4a86ec" />
        </svg>
        <div className="h-0.5 w-full bg-[#76b9ed]" />
      </div>
      <div className="ml-[5px] flex w-[48px] flex-col items-center justify-between bg-[#4e616a]">
        <div className="mt-2 flex h-[23px] w-[22px] items-center justify-center bg-[#fafafa]">
          <TableauLogo mono className="h-5 w-5" />
        </div>
        <div className="h-0.5 w-full bg-[#76b9ed]" />
      </div>
      <div className="ml-auto flex items-center text-[15px] leading-none">
        <svg viewBox="0 0 24 20" className="h-5 w-6">
          <path d="M9 1c1 3-1 6-5 6.500l-4 .5c1 4 5 6 8 5s5-4 4.500-7.500S10.500 1.500 9 1z" fill="#f9c22b" />
          <path d="M7 19a4.300 4.300 0 0 1 0-8.500 5.800 5.800 0 0 1 10.500 0A4.300 4.300 0 0 1 18.500 19z" fill="#cfe6f8" />
        </svg>
        <span className="ml-[7px] w-[39px] text-[14px]">28°C</span>
        <span className="w-[78px] whitespace-nowrap">구름 조금</span>
        <svg viewBox="0 0 12 8" className="h-2 w-3" fill="none" stroke="#fff" strokeWidth="1.300">
          <path d="M.500 7 6 1.500 11.500 7" />
        </svg>
        <svg viewBox="0 0 17 12" className="ml-[10px] h-3 w-[17px]" fill="none" stroke="#fff" strokeWidth="1.200">
          <path d="M5.500 2.500H15v8H4v-2M1.500 0v2M4 0v2M.500 2.500h4.500v2.500H.500zM2.800 5v3.500h2" />
          <path d="M6 4.500h7.500v4.500H6z" fill="#fff" stroke="none" />
          <path d="M16.200 5v3" />
        </svg>
        <svg viewBox="0 0 14 14" className="ml-[10px] h-[13px] w-[13px]" fill="none" stroke="#ddd" strokeWidth="1.200">
          <path d="M.800 13C1 6 6 1.500 13 1M4 13c.3-5 4-8.500 9-8.700M7.200 13c.2-3 2.500-5.300 5.800-5.500M10 13c.1-1.300 1.300-2.500 3-2.600" />
          <circle cx="12.300" cy="12.500" r="1" fill="#fff" stroke="none" />
        </svg>
        <svg viewBox="0 0 17 14" className="ml-[8px] h-3.5 w-[17px]" fill="none" stroke="#fff" strokeWidth="1.100">
          <path d="M.600 4.800h2.600l3.600-3.500v11.400L3.200 9.200H.600zM9 4.500c1.200 1.500 1.200 3.500 0 5M11.200 2.800c2.200 2.500 2.200 6 0 8.400" />
          <path d="M13.500 1.200c3 3.500 3 8 0 11.600" stroke="#888" />
        </svg>
        <svg viewBox="0 0 15 15" className="ml-[6px] h-[15px] w-[15px]">
          <circle cx="7.500" cy="7.500" r="7.300" fill="#9aa0a8" />
          <path d="M4.700 4.700l5.600 5.600M10.300 4.700l-5.600 5.600" stroke="#1b2641" strokeWidth="2" />
        </svg>
        <div className="ml-[14px] flex h-4 w-4 items-center justify-center border border-white bg-white text-[13px] font-medium text-black">한</div>
        <div className="ml-[16px] flex w-[66px] flex-col items-center gap-[5px] pb-0.5 text-[12px] leading-[13px] whitespace-nowrap">
          <span className="text-[12.5px] tracking-[0.2px]">오후 7:43</span>
          <span className="tracking-[0.3px]">2021-08-10</span>
        </div>
        <div className="relative ml-[19px] h-6 w-[26px]">
          <svg viewBox="0 0 16 15" className="h-[15px] w-4">
            <path d="M0 0h16v12H7l-3 3v-3H0z" fill="#fff" />
            <path d="M3 3.500h10M3 6h10M3 8.500h7" stroke="#1b2641" />
          </svg>
          <div className="absolute top-[7px] left-[5px] flex h-[17px] w-[21px] items-center justify-center rounded-full border border-[#999] bg-[#3b3f46] text-[11px] font-bold">
            14
          </div>
        </div>
        <div className="mr-1 ml-[10px] h-10 w-px bg-[#5d6577]" />
      </div>
    </div>
  );
}

export default function App() {
  return (
    <div className={`relative flex h-[1080px] w-[1920px] flex-col overflow-hidden bg-[#f5f5f5] ${FONT}`}>
      <TopBars />
      <div className="flex h-[905px] shrink-0">
        <DataPane />
        <CardsColumn />
        <Workspace />
      </div>
      <BottomTabs />
      <Taskbar />
      <Dialog />
    </div>
  );
}
